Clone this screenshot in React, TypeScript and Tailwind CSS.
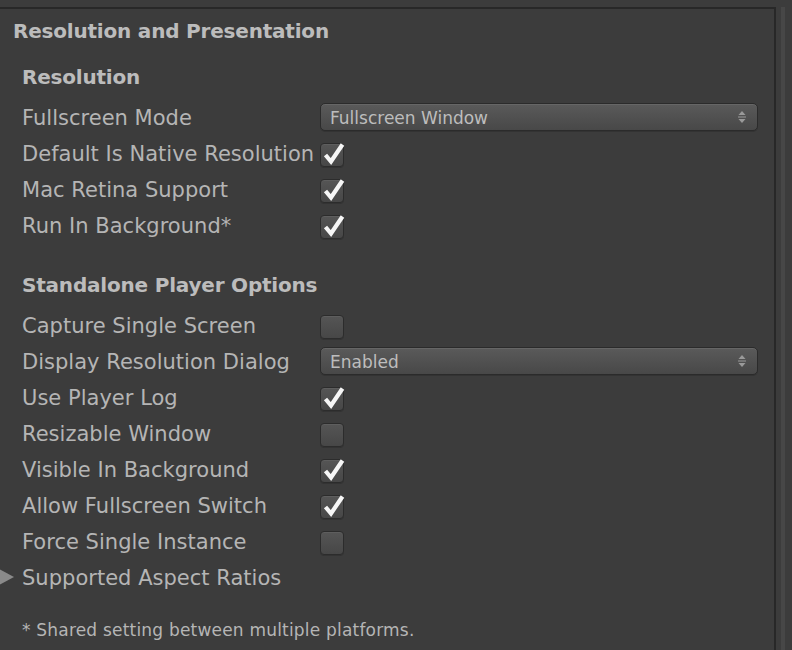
import { ReactNode } from "react";

const font = { fontFamily: '"DejaVu Sans", "Liberation Sans", sans-serif' };

function Check({ on }: { on?: boolean }) {
  return (
    <div className="relative mt-[3px] h-6 w-6 rounded-[4px] border border-[#2c2c2c] bg-gradient-to-b from-[#555555] to-[#474747] shadow-[inset_0_1px_0_#5e5e5e,0_1px_0_#333]">
      {on && (
        <svg viewBox="0 0 24 24" className="absolute -top-[2px] left-[1px] h-6 w-6">
          <path d="M3.5 13 L9 19.5 L20.5 2.5" fill="none" stroke="#f6f6f6" strokeWidth="4.2" strokeLinecap="butt" strokeLinejoin="miter" />
        </svg>
      )}
    </div>
  );
}

function Dropdown({ value }: { value: string }) {
  return (
    <div className="flex h-7 w-[438px] items-center justify-between rounded-[5px] border border-[#2b2b2b] bg-gradient-to-b from-[#5a5a5a] to-[#484848] pl-[9px] pr-[10px] text-[17px] tracking-normal text-[#bdbdbd] shadow-[inset_0_1px_0_#666,0_1px_0_#333]">
      <span className="pt-[3px]">{value}</span>
      <svg viewBox="0 0 10 14" className="h-[14px] w-[10px]">
        <path d="M5 1 L8.5 5 L1.5 5 Z" fill="#9a9a9a" />
        <rect x="1" y="6.5" width="8" height="1" fill="#9a9a9a" />
        <path d="M5 13 L8.5 9 L1.5 9 Z" fill="#9a9a9a" />
      </svg>
    </div>
  );
}

function Row({ label, children, arrow }: { label: string; children?: ReactNode; arrow?: boolean }) {
  return (
    <div className="relative flex h-9 items-center">
      {arrow && (
        <svg viewBox="0 0 15 16" className="absolute -left-px top-[10px] h-4 w-[15px]">
          <path d="M0 0 L15 8 L0 16 Z" fill="#8a8a8a" />
        </svg>
      )}
      <span className="mt-[3px] w-[320px] shrink-0 pl-[22px] whitespace-nowrap text-[21px] tracking-[0.02px]">{label}</span>
      {children}
    </div>
  );
}

export default function App() {
  return (
    <div className="h-[650px] w-[792px] overflow-hidden bg-[#3c3c3c] text-[20px] text-[#b5b5b5]" style={font}>
      <div className="flex h-full pt-[7px]">
        <div className="h-[700px] w-[776px] border-t-2 border-r-2 border-[#282828]">
          <div className="mt-[4px] flex h-9 items-center pl-[13px] font-bold tracking-[-0.2px] text-[#bcbcbc]">Resolution and Presentation</div>
          <div className="mt-[10px] flex h-9 items-center pl-[22px] font-bold tracking-[-0.2px] text-[#bcbcbc]">Resolution</div>
          <div className="mt-[4px]">
            <Row label="Fullscreen Mode">
              <Dropdown value="Fullscreen Window" />
            </Row>
            <Row label="Default Is Native Resolution">
              <Check on />
            </Row>
            <Row label="Mac Retina Support">
              <Check on />
            </Row>
            <Row label="Run In Background*">
              <Check on />
            </Row>
          </div>
          <div className="mt-6 flex h-9 items-center pl-[22px] font-bold tracking-[-0.2px] text-[#bcbcbc]">Standalone Player Options</div>
          <div className="mt-1">
            <Row label="Capture Single Screen">
              <Check />
            </Row>
            <Row label="Display Resolution Dialog">
              <Dropdown value="Enabled" />
            </Row>
            <Row label="Use Player Log">
              <Check on />
            </Row>
            <Row label="Resizable Window">
              <Check />
            </Row>
            <Row label="Visible In Background">
              <Check on />
            </Row>
            <Row label="Allow Fullscreen Switch">
              <Check on />
            </Row>
            <Row label="Force Single Instance">
              <Check />
            </Row>
            <Row label="Supported Aspect Ratios" arrow />
          </div>
          <div className="mt-[18px] flex h-9 items-center pl-[22px] text-[17px] tracking-[0.2px]">* Shared setting between multiple platforms.</div>
        </div>
        <div className="ml-[5px] h-full w-[4px] bg-[#474747]" />
      </div>
    </div>
  );
}
